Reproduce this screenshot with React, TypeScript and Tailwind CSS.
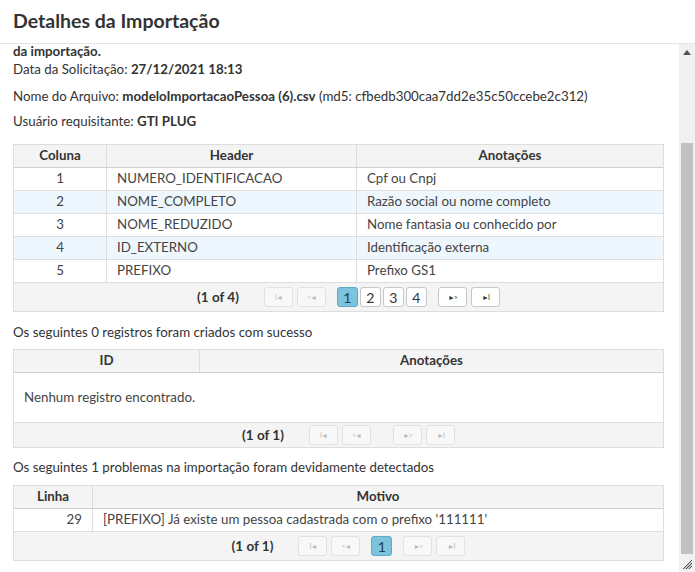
import React from 'react';

const font = { fontFamily: 'Lato, "Noto Sans", sans-serif' };

type PagerProps = { label: string; pages: number[]; active?: number; enabled: boolean };

const NavBtn: React.FC<{ glyph: string; enabled: boolean }> = ({ glyph, enabled }) => (
  <span
    className={`w-[29px] h-[20px] rounded-[3px] border flex items-center justify-center text-[7px] tracking-[-1px] ${
      enabled ? 'border-[#c8c8c8] bg-white text-[#333]' : 'border-[#e2e2e2] bg-[#f8f8f8] text-[#bbb]'
    }`}
  >
    {glyph}
  </span>
);

const Pager: React.FC<PagerProps> = ({ label, pages, active, enabled }) => (
  <div className="h-full bg-[#f4f4f4] flex items-center justify-center gap-[4px] pl-[20px]">
    <span className="font-bold text-[13.5px] text-[#333] mr-[21px]">{label}</span>
    <NavBtn glyph="I◄" enabled={false} />
    <NavBtn glyph="<◄" enabled={false} />
    <div className="flex gap-[2px] mx-[7px]">
      {pages.map((p) => (
        <span
          key={p}
          className={`min-w-[21px] h-[20px] px-[4px] rounded-[3px] border flex items-center justify-center text-[14px] ${
            p === active
              ? 'bg-[#7cc3dd] border-[#5fa9c6] text-[#1f3e4a]'
              : 'bg-white border-[#c8c8c8] text-[#333]'
          }`}
        >
          {p}
        </span>
      ))}
    </div>
    <NavBtn glyph="►>" enabled={enabled} />
    <NavBtn glyph="►I" enabled={enabled} />
  </div>
);

const rows = [
  ['1', 'NUMERO_IDENTIFICACAO', 'Cpf ou Cnpj'],
  ['2', 'NOME_COMPLETO', 'Razão social ou nome completo'],
  ['3', 'NOME_REDUZIDO', 'Nome fantasia ou conhecido por'],
  ['4', 'ID_EXTERNO', 'Identificação externa'],
  ['5', 'PREFIXO', 'Prefixo GS1'],
];

const App: React.FC = () => {
  return (
    <div className="w-[695px] h-[572px] bg-white text-[#333] relative overflow-hidden" style={font}>
      <div className="h-[44px] border-b border-[#e5e5e5] px-[13px] flex items-center">
        <h1 className="text-[19.5px] font-bold text-[#333] pb-[2px]">Detalhes da Importação</h1>
      </div>
      <div className="flex h-[528px]">
        <div className="flex-1 overflow-hidden px-[13px] text-[13.3px]">
          <div className="font-bold leading-[16px] mt-[-1px]">da importação.</div>
          <p className="mt-[1px] leading-[18px]">
            Data da Solicitação: <b>27/12/2021 18:13</b>
          </p>
          <p className="mt-[9px] leading-[18px]">
            Nome do Arquivo: <b>modeloImportacaoPessoa (6).csv</b> (md5: cfbedb300caa7dd2e35c50ccebe2c312)
          </p>
          <p className="mt-[7px] leading-[18px]">
            Usuário requisitante: <b>GTI PLUG</b>
          </p>

          <div className="mt-[14px] w-[651px] border border-[#ddd]">
            <div className="grid grid-cols-[93px_250px_1fr] h-[23px] bg-[#f4f4f4] border-b border-[#cfcfcf] font-bold">
              <div className="flex items-center justify-center border-r border-[#ddd]">Coluna</div>
              <div className="flex items-center justify-center border-r border-[#ddd]">Header</div>
              <div className="flex items-center justify-center">Anotações</div>
            </div>
            {rows.map((r, i) => (
              <div
                key={r[0]}
                className={`grid grid-cols-[93px_250px_1fr] h-[23px] border-b border-[#ddd] text-[#444] ${
                  i % 2 === 1 ? 'bg-[#edf7fd]' : 'bg-white'
                }`}
              >
                <div className="flex items-center justify-center border-r border-[#ddd]">{r[0]}</div>
                <div className="flex items-center px-[10px] border-r border-[#ddd]">{r[1]}</div>
                <div className="flex items-center px-[10px]">{r[2]}</div>
              </div>
            ))}
            <div className="h-[28px]">
              <Pager label="(1 of 4)" pages={[1, 2, 3, 4]} active={1} enabled />
            </div>
          </div>

          <p className="mt-[11px] leading-[18px]">Os seguintes 0 registros foram criados com sucesso</p>

          <div className="mt-[8px] w-[651px] border border-[#ddd]">
            <div className="grid grid-cols-[186px_1fr] h-[23px] bg-[#f4f4f4] border-b border-[#cfcfcf] font-bold">
              <div className="flex items-center justify-center border-r border-[#ddd]">ID</div>
              <div className="flex items-center justify-center">Anotações</div>
            </div>
            <div className="h-[50px] flex items-center px-[10px] border-b border-[#ddd] text-[#444]">
              Nenhum registro encontrado.
            </div>
            <div className="h-[24px]">
              <Pager label="(1 of 1)" pages={[]} enabled={false} />
            </div>
          </div>

          <p className="mt-[10px] leading-[18px]">Os seguintes 1 problemas na importação foram devidamente detectados</p>

          <div className="mt-[9px] w-[651px] border border-[#ddd]">
            <div className="grid grid-cols-[79px_1fr] h-[23px] bg-[#f4f4f4] border-b border-[#cfcfcf] font-bold">
              <div className="flex items-center justify-center border-r border-[#ddd]">Linha</div>
              <div className="flex items-center justify-center">Motivo</div>
            </div>
            <div className="grid grid-cols-[79px_1fr] h-[23px] border-b border-[#ddd] text-[#444]">
              <div className="flex items-center justify-end px-[10px] border-r border-[#ddd]">29</div>
              <div className="flex items-center px-[10px]">[PREFIXO] Já existe um pessoa cadastrada com o prefixo '111111'</div>
            </div>
            <div className="h-[28px]">
              <Pager label="(1 of 1)" pages={[1]} active={1} enabled={false} />
            </div>
          </div>
        </div>

        <div className="w-[16px] bg-[#f1f1f1] flex flex-col items-center">
          <div className="h-[17px] flex items-center justify-center">
            <svg width="8" height="5" viewBox="0 0 8 5">
              <path d="M0 5 L4 0 L8 5 Z" fill="#505050" />
            </svg>
          </div>
          <div className="mt-[82px] w-[12px] h-[411px] bg-[#c1c1c1]" />
        </div>
      </div>

      <svg className="absolute right-[3px] bottom-[3px]" width="10" height="10" viewBox="0 0 10 10">
        <path d="M10 1 L1 10 M10 4 L4 10 M10 7 L7 10" stroke="#555" strokeWidth="1" />
        <path d="M10 2.5 L2.5 10 M10 5.5 L5.5 10" stroke="#999" strokeWidth="1" />
      </svg>
    </div>
  );
};

export default App;
